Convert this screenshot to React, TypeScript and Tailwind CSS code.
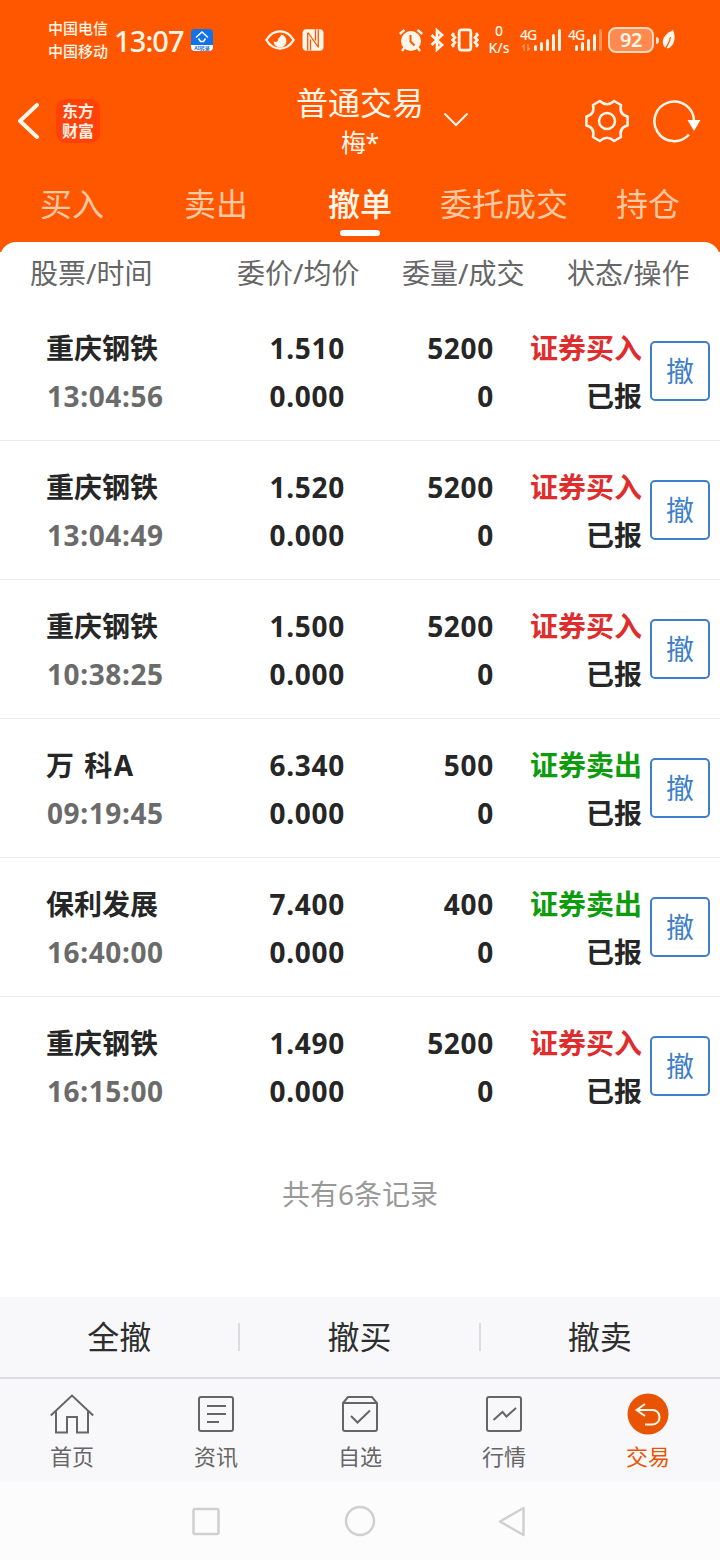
import clsx from 'clsx'

type Order = {
    name: string
    time: string
    price: string
    qty: string
    side: 'buy' | 'sell'
}

const orders: Order[] = [
    { name: '重庆钢铁', time: '13:04:56', price: '1.510', qty: '5200', side: 'buy' },
    { name: '重庆钢铁', time: '13:04:49', price: '1.520', qty: '5200', side: 'buy' },
    { name: '重庆钢铁', time: '10:38:25', price: '1.500', qty: '5200', side: 'buy' },
    { name: '万 科A', time: '09:19:45', price: '6.340', qty: '500', side: 'sell' },
    { name: '保利发展', time: '16:40:00', price: '7.400', qty: '400', side: 'sell' },
    { name: '重庆钢铁', time: '16:15:00', price: '1.490', qty: '5200', side: 'buy' },
]

const tabs = ['买入', '卖出', '撤单', '委托成交', '持仓']

const barHeights = [6, 9, 12, 17, 22]

function Signal({ active }: { active: number }) {
    return (
        <div className="flex items-end gap-[2.5px]">
            {barHeights.map((height, i) => (
                <span
                    key={i}
                    className={clsx('w-[3.5px] rounded-full bg-[#fff3e6]', i >= active && 'opacity-40')}
                    style={{ height }}
                />
            ))}
        </div>
    )
}

function StatusBar() {
    return (
        <div className="flex h-20 items-center text-[#fff6ea]">
            <div className="ml-12 w-[60px] text-[15px] leading-[23px] font-medium whitespace-nowrap">
                <div>中国电信</div>
                <div>中国移动</div>
            </div>
            <div className="ml-[6px] w-[70px] text-[29px] leading-none font-medium tracking-[-0.9px]">13:07</div>
            <div className="ml-[7px] flex h-[22px] w-[22px] flex-col overflow-hidden rounded-[4px] bg-[#1272e8]">
                <svg className="h-4 w-[22px]" viewBox="0 0 22 16" fill="none" stroke="white" strokeWidth="1.5">
                    <path d="M5 8.5 11 3l6 5.500M7.500 9.500 9.500 12.500h3l2-3" />
                </svg>
                <div className="h-[6px] bg-white text-center text-[5px] leading-[6px] font-bold text-[#1272e8]">AI转录</div>
            </div>
            {/* Eye comfort + NFC */}
            <svg className="ml-[52px] h-5 w-[30px]" viewBox="0 0 30 20" fill="none" stroke="currentColor" strokeWidth="2.400">
                <path d="M1.400 10C5 4 10 1.400 15 1.400S25 4 28.600 10C25 16 20 18.600 15 18.600S5 16 1.400 10Z" />
                <path d="M16 4.500A6.500 6.500 0 1 1 8.500 11.500C11 12.500 13.500 11.500 13.300 8.500 14 8 15.800 7 16 4.500Z" fill="currentColor" stroke="none" />
            </svg>
            <svg className="ml-[7px] h-[22px] w-[22px]" viewBox="0 0 22 22" fill="currentColor">
                <rect x=".5" y=".3" width="21" height="21.400" rx="4" />
                <path d="M5.700 4v17.500M16.300.5V18M6 3.500 16.500 18.500M8.500 10.500v11M13.500.5v11" stroke="#ff5700" strokeWidth="1.300" fill="none" />
            </svg>
            {/* Alarm, bluetooth, vibrate */}
            <svg className="ml-[75px] h-6 w-6" viewBox="0 0 24 24" fill="none" stroke="currentColor" strokeWidth="2.400">
                <circle cx="12" cy="13" r="10" fill="currentColor" stroke="none" />
                <path d="M.8 6 5.500 1.800M23.200 6 18.500 1.800M5.500 19.500l-2.500 3.500M18.500 19.500l2.500 3.500" />
                <path d="M11.500 7v6.500l4 4" stroke="#ff5700" strokeWidth="2" />
            </svg>
            <svg className="ml-[7px] h-6 w-[14px]" viewBox="0 0 14 24" fill="none" stroke="currentColor" strokeWidth="2.700">
                <path d="M1.500 7 12 17l-5 4.500v-19L12 7 1.500 17" />
            </svg>
            <svg className="ml-[7px] h-6 w-[28px]" viewBox="0 0 28 24" fill="none" stroke="currentColor" strokeWidth="2.800">
                <rect x="8.200" y="1.900" width="11.600" height="20.200" rx="2" />
                <path d="M3 5 1.500 7 4 9.500 1.500 12 4 14.500 1.500 17 3 19M25 5l1.500 2L24 9.500l2.500 2.500-2.500 2.500 2.500 2.500-1.500 2" strokeWidth="2.600" />
            </svg>
            <div className="ml-2 flex w-6 flex-col items-center text-[14px] leading-[16px] font-medium whitespace-nowrap">
                <span className="h-[17px]">0</span>
                <span className="h-[17px]">K/s</span>
            </div>
            <div className="relative ml-[9px] flex h-6 w-[41px] items-end justify-end pb-[1px]">
                <span className="absolute top-0 left-0 text-[14px] leading-[14px] font-medium tracking-[-1px]">4G</span>
                <svg className="absolute bottom-[1px] left-[1px] h-[7px] w-[10px] opacity-40" viewBox="0 0 10 7" fill="none" stroke="currentColor" strokeWidth="1.500">
                    <path d="M1 3l2-2v6M9 4 7 6V0" />
                </svg>
                <Signal active={5} />
            </div>
            <div className="relative ml-[7px] flex h-6 w-[34px] items-end justify-end pb-[1px]">
                <span className="absolute top-0 left-0 text-[14px] leading-[14px] font-medium tracking-[-1px]">4G</span>
                <Signal active={4} />
            </div>
            <div className="ml-[6px] flex h-[26px] w-[46px] items-center justify-center rounded-[8px] border-2 border-[#ffd9bd] bg-[#ff8a50] text-[20px] leading-none font-semibold tracking-[-0.5px]">
                92
            </div>
            <span className="ml-[2px] h-[7px] w-[3px] rounded-r bg-[#ffe6d0]" />
            <svg className="ml-[3px] h-[20px] w-[14px]" viewBox="0 0 14 20" fill="currentColor">
                <path d="M11 0C5 3 .5 7 .8 12.500 1 16 3 18 5.500 18.500 11 17.500 15 9 11 0Z" />
                <path d="M8.500 7C8 12 5.500 14.500 3 20" stroke="#ff5700" strokeWidth="1.200" fill="none" />
            </svg>
        </div>
    )
}

function Header() {
    return (
        <div className="grid h-[88px] grid-cols-[1fr_auto_1fr]">
            <div className="flex items-center pb-[6px]">
                <svg className="ml-[17px] h-9 w-[23px]" viewBox="0 0 23 36" fill="none" stroke="#fff6ea" strokeWidth="4" strokeLinecap="round" strokeLinejoin="round">
                    <path d="M20 2 3 18l17 16" />
                </svg>
                <div className="ml-[16px] flex h-[44px] w-[44px] flex-col items-center justify-center rounded-[9px] bg-[#ff4308] text-[16px] leading-[20px] font-bold text-[#ffefe6]">
                    <span>东方</span>
                    <span>财富</span>
                </div>
            </div>
            <div className="relative flex flex-col items-center text-[#fff6ea]">
                <h1 className="mt-[1px] text-[32px] leading-[44px] font-normal">普通交易</h1>
                <p className="text-[25px] leading-[34px] tracking-[-0.5px]">梅*</p>
                <svg className="absolute top-8 left-[147px] h-[15px] w-[26px]" viewBox="0 0 26 15" fill="none" stroke="#fff6ea" strokeWidth="2">
                    <path d="M1.500 1.500 13 13 24.500 1.500" />
                </svg>
            </div>
            <div className="flex items-center justify-end gap-6 pr-[19px] pb-[7px]">
                <svg className="h-11 w-11" viewBox="-22 -22 44 44" fill="none" stroke="#fff6ea" strokeWidth="2.500" strokeLinejoin="round">
                    <path d="M20.600-4.500Q11.800-6.800 14-16L7.200-20Q0-13.600-7.200-20L-14-16Q-11.800-6.800-20.600-4.500V4.500Q-11.800 6.800-14 16L-7.200 20Q0 13.600 7.200 20L14 16Q11.800 6.800 20.600 4.500Z" />
                    <circle r="8" />
                </svg>
                <svg className="h-11 w-12" viewBox="0 0 48 44" fill="none" stroke="#fff6ea" strokeWidth="2.500">
                    <path d="M41 22A19.800 19.800 0 1 0 36 35.500" />
                    <path d="M34.500 21h13l-6.500 11Z" fill="#fff" stroke="none" />
                </svg>
            </div>
        </div>
    )
}

function OrderRow({ order }: { order: Order }) {
    return (
        <li className="grid h-[139px] grid-cols-[46px_148px_151px_149px_148px_78px] items-center border-b border-[#ebebeb] text-[28px] leading-[48px] font-bold text-[#262626] last:border-transparent">
            <div className="col-start-2 pt-[2px] whitespace-nowrap">
                <div className={clsx(order.name.endsWith('A') && 'tracking-[1.500px]')}>{order.name}</div>
                <div className="pl-[1px] tracking-[0.6px] text-[#6b6b6b]">{order.time}</div>
            </div>
            <div className="pt-[2px] text-right tracking-[0.7px]">
                <div>{order.price}</div>
                <div>0.000</div>
            </div>
            <div className="pt-[2px] text-right tracking-[0.7px]">
                <div>{order.qty}</div>
                <div>0</div>
            </div>
            <div className="pt-[2px] text-right whitespace-nowrap">
                <div className={order.side === 'buy' ? 'text-[#df2d2d]' : 'text-[#0c9c0c]'}>
                    {order.side === 'buy' ? '证券买入' : '证券卖出'}
                </div>
                <div>已报</div>
            </div>
            <button className="ml-[8px] h-[60px] w-[60px] rounded-[5px] border-2 border-[#3f7fc9] font-normal text-[#3f7fc9]">
                <span className="block leading-[56px]">撤</span>
            </button>
        </li>
    )
}

const navItems = [
    {
        label: '首页',
        icon: <path d="M.8 21.500 22 1.500l21.200 20M6 17.500V38.500h11V23h10v15.500h11V17.500" />,
    },
    {
        label: '资讯',
        icon: (
            <>
                <rect x="5" y="3" width="34" height="34" rx="2" />
                <path d="M13 12h19M13 20h19M13 28h12" />
            </>
        ),
    },
    {
        label: '自选',
        icon: (
            <>
                <path d="M5 9 10 3h24l5 6v26a2 2 0 0 1-2 2H7a2 2 0 0 1-2-2ZM5 9h34" />
                <path d="m13 22 6.500 6.500L32 16.500" />
            </>
        ),
    },
    {
        label: '行情',
        icon: (
            <>
                <rect x="5" y="3" width="34" height="34" rx="2" />
                <path d="m11.500 26 9-8 4 4.500L34 14" />
            </>
        ),
    },
    {
        label: '交易',
        active: true,
        icon: (
            <>
                <circle cx="22" cy="20" r="20.500" fill="#e85404" stroke="none" />
                <path d="M19 10 10.500 16l8.500 6M11 16h15.500c4 0 7 3 7 7.200s-3 7.300-7 7.300H19" stroke="#fff6ea" />
            </>
        ),
    },
]

export default function App() {
    return (
        <div className="flex h-[1560px] w-[720px] flex-col overflow-hidden bg-white font-['Noto_Sans','Noto_Sans_CJK_SC',sans-serif]">
            <header className="h-[252px] shrink-0 bg-[#ff5700]">
                <StatusBar />
                <Header />
                <nav className="grid grid-cols-5 text-[32px] text-[#ffc9a4]">
                    {tabs.map((tab) => (
                        <div
                            key={tab}
                            className={clsx(
                                'flex flex-col items-center pt-[5px] leading-[62px] whitespace-nowrap',
                                tab === '撤单' && 'font-medium text-[#fff6ea]',
                            )}
                        >
                            {tab}
                            {tab === '撤单' && <span className="-mt-[5px] h-[6px] w-10 rounded-full bg-white" />}
                        </div>
                    ))}
                </nav>
            </header>

            <main className="relative -mt-[10px] flex-1 rounded-t-[16px] bg-white">
                <div className="grid h-[60px] grid-cols-[30px_207px_165px_165px_auto] text-[28px] leading-[62px] whitespace-nowrap text-[#666]">
                    <span className="col-start-2">股票/时间</span>
                    <span>委价/均价</span>
                    <span>委量/成交</span>
                    <span>状态/操作</span>
                </div>
                <ul>
                    {orders.map((order) => (
                        <OrderRow key={order.time} order={order} />
                    ))}
                </ul>
                <p className="pt-[36px] text-center text-[28px] leading-[44px] text-[#999]">共有6条记录</p>
            </main>

            <div className="flex h-[82px] shrink-0 items-center border-b-2 border-[#dcdde0] bg-[#f8f8fb] pr-px text-[32px] text-[#2e2e2e]">
                {['全撤', '撤买', '撤卖'].map((label, i) => (
                    <button key={label} className={clsx('h-7 flex-1 leading-7', i < 2 && 'border-r-2 border-[#dcdde0]')}>
                        {label}
                    </button>
                ))}
            </div>

            <nav className="grid h-[103px] shrink-0 grid-cols-5 bg-[#f8f8fb] text-[22px] text-[#666]">
                {navItems.map((item) => (
                    <div key={item.label} className={clsx('flex flex-col items-center pt-[15px]', item.active && 'text-[#e85404]')}>
                        <svg className="h-[42px] w-11 overflow-visible" viewBox="0 0 44 42" fill="none" stroke="currentColor" strokeWidth="2">
                            {item.icon}
                        </svg>
                        <span className="mt-[5px] leading-[30px]">{item.label}</span>
                    </div>
                ))}
            </nav>

            {/* System navigation */}
            <div className="flex h-[78px] shrink-0 items-center justify-center bg-[#fcfcfc]">
                <svg className="h-8 w-[336px]" viewBox="192 0 336 32" fill="none" stroke="#d0d0d0" strokeWidth="2.500" strokeLinejoin="round">
                    <rect x="193.500" y="4" width="25" height="25" rx="1.500" />
                    <circle cx="360" cy="16" r="14" />
                    <path d="M523.500 3v27L500 16.500Z" />
                </svg>
            </div>
        </div>
    )
}
